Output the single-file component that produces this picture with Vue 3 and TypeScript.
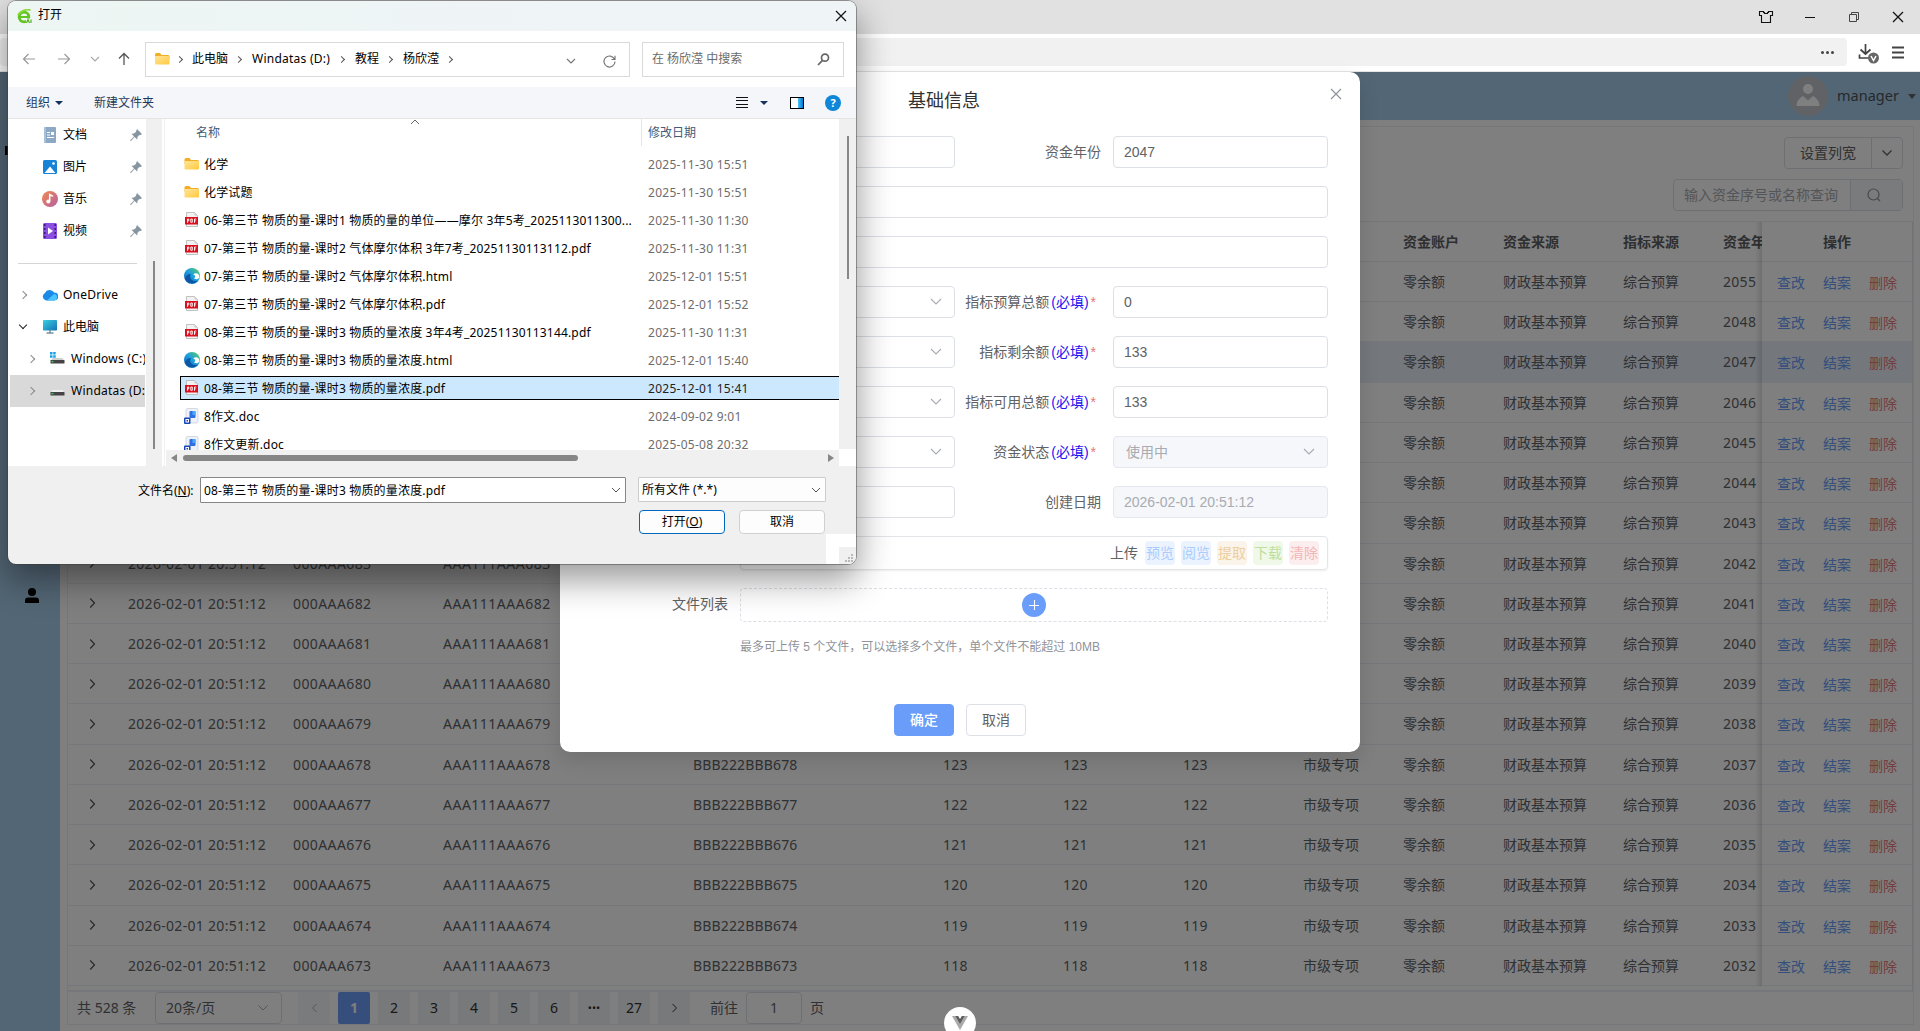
<script setup lang="ts">
interface Row { code: number; amount: number; year: number; active: boolean }
interface FileItem { kind: 'folder' | 'pdf' | 'edge' | 'doc'; name: string; date: string; selected?: boolean }

const rows: Row[] = Array.from({ length: 18 }, (_, i) => ({
  code: 690 - i,
  amount: 135 - i,
  year: i === 0 ? 2055 : 2049 - i,
  active: i === 2,
}))

const places = ['文档', '图片', '音乐', '视频']

const files: FileItem[] = [
  { kind: 'folder', name: '化学', date: '2025-11-30 15:51' },
  { kind: 'folder', name: '化学试题', date: '2025-11-30 15:51' },
  { kind: 'pdf', name: '06-第三节 物质的量-课时1 物质的量的单位——摩尔 3年5考_2025113011300...', date: '2025-11-30 11:30' },
  { kind: 'pdf', name: '07-第三节 物质的量-课时2 气体摩尔体积 3年7考_20251130113112.pdf', date: '2025-11-30 11:31' },
  { kind: 'edge', name: '07-第三节 物质的量-课时2 气体摩尔体积.html', date: '2025-12-01 15:51' },
  { kind: 'pdf', name: '07-第三节 物质的量-课时2 气体摩尔体积.pdf', date: '2025-12-01 15:52' },
  { kind: 'pdf', name: '08-第三节 物质的量-课时3 物质的量浓度 3年4考_20251130113144.pdf', date: '2025-11-30 11:31' },
  { kind: 'edge', name: '08-第三节 物质的量-课时3 物质的量浓度.html', date: '2025-12-01 15:40' },
  { kind: 'pdf', name: '08-第三节 物质的量-课时3 物质的量浓度.pdf', date: '2025-12-01 15:41', selected: true },
  { kind: 'doc', name: '8作文.doc', date: '2024-09-02 9:01' },
  { kind: 'doc', name: '8作文更新.doc', date: '2025-05-08 20:32' },
]

const formRows = [
  { select: false, label: '资金年份', required: false, value: '2047', disabled: false, wide: false },
  { select: false, label: '', required: false, value: '', disabled: false, wide: true },
  { select: false, label: '', required: false, value: '', disabled: false, wide: true },
  { select: true, label: '指标预算总额', required: true, value: '0', disabled: false, wide: false },
  { select: true, label: '指标剩余额', required: true, value: '133', disabled: false, wide: false },
  { select: true, label: '指标可用总额', required: true, value: '133', disabled: false, wide: false },
  { select: true, label: '资金状态', required: true, value: '使用中', disabled: true, wide: false },
  { select: false, label: '创建日期', required: false, value: '2026-02-01 20:51:12', disabled: true, wide: false },
]

const tags = [
  { text: '预览', tone: 'blue' },
  { text: '阅览', tone: 'blue' },
  { text: '提取', tone: 'amber' },
  { text: '下载', tone: 'green' },
  { text: '清除', tone: 'red' },
]

const pages = ['1', '2', '3', '4', '5', '6', '•••', '27']
</script>

<template>
  <div class="screen">
    <svg class="defs" width="0" height="0">
      <defs>
        <linearGradient id="gFolder" x1="0" y1="0" x2="1" y2="1"><stop offset="0" stop-color="#ffe59a" /><stop offset="1" stop-color="#ffc93c" /></linearGradient>
        <linearGradient id="gEdge" x1="0" y1="1" x2="1" y2="0"><stop offset="0" stop-color="#0c59a4" /><stop offset=".5" stop-color="#1b9de2" /><stop offset="1" stop-color="#5fd35a" /></linearGradient>
        <linearGradient id="gMusic" x1="0" y1="0" x2="1" y2="1"><stop offset="0" stop-color="#f08a4b" /><stop offset="1" stop-color="#b65fa8" /></linearGradient>
        <linearGradient id="gPc" x1="0" y1="0" x2="1" y2="1"><stop offset="0" stop-color="#39cfe0" /><stop offset="1" stop-color="#1273b5" /></linearGradient>
        <linearGradient id="gPane" x1="0" y1="0" x2="1" y2="0"><stop offset="0" stop-color="#4cc2f5" /><stop offset="1" stop-color="#0078d4" /></linearGradient>
      </defs>
    </svg>

    <!-- browser chrome -->
    <header class="tabbar">
      <svg class="win shirt" width="16" height="14" viewBox="0 0 16 14"><path d="M1.500 1.500h4v1h1v1h3v-1h1v-1h4v4h-2v7h-9v-7h-2z" fill="none" stroke="#111" stroke-width="1.100" /></svg>
      <svg class="win" width="12" height="12" viewBox="0 0 12 12"><path d="M1 6.500h10" stroke="#111" /></svg>
      <svg class="win" width="12" height="12" viewBox="0 0 12 12"><path d="M1.500 3.500h7v7h-7zM3.500 3.500v-2h7v7h-2" fill="none" stroke="#444" /></svg>
      <svg class="win" width="12" height="12" viewBox="0 0 12 12"><path d="M1 1l10 10M11 1L1 11" stroke="#111" stroke-width="1.300" /></svg>
    </header>
    <div class="urlbar">
      <div class="address"><i></i><i></i><i></i></div>
      <svg class="dl" width="22" height="20" viewBox="0 0 22 20">
        <path d="M7.500 0v9.500M2.500 5.500l5 4.500 5-4.500M1.500 10.500v3.500h9" fill="none" stroke="#444" stroke-width="1.700" />
        <circle cx="15.500" cy="14" r="5.500" fill="#666" /><path d="M13 12l2.500 4.500L18 12" fill="none" stroke="#fff" stroke-width="1.500" />
      </svg>
      <svg class="menu" width="12" height="13" viewBox="0 0 12 13"><path d="M0 1.500h12M0 6.500h12M0 11.500h12" stroke="#444" stroke-width="2" /></svg>
    </div>

    <!-- application page -->
    <div class="page">
      <div class="topbar">
        <svg width="40" height="40" viewBox="0 0 40 40"><circle cx="20" cy="20" r="20" fill="#c0c4cc" /><circle cx="20" cy="13" r="5" fill="#fff" /><path d="M8.500 30c0-5 3-8 6.500-10l5 4.500 5-4.500c3.500 2 6.500 5 6.500 10z" fill="#fff" /></svg>
        <span class="who">manager</span>
        <i class="caret"></i>
      </div>
      <div class="body">
        <aside class="rail">
          <b></b>
          <svg width="14" height="15" viewBox="0 0 14 15"><circle cx="7" cy="4" r="4" fill="#000" /><path d="M0 15v-2.500c0-2 1-3 3-3h8c2 0 3 1 3 3V15z" fill="#000" /></svg>
        </aside>
        <main class="panel">
          <div class="tools">
            <div class="split"><span>设置列宽</span><em><svg width="12" height="8" viewBox="0 0 12 8"><path d="M1.500 1.500L6 6l4.500-4.500" fill="none" stroke="#606266" stroke-width="1.300" /></svg></em></div>
            <div class="search"><span>输入资金序号或名称查询</span><em><svg width="14" height="14" viewBox="0 0 14 14"><circle cx="6.500" cy="6.500" r="5.500" fill="none" stroke="#909399" stroke-width="1.200" /><path d="M10.500 10.500l2.500 2.500" stroke="#909399" stroke-width="1.200" /></svg></em></div>
          </div>
          <div class="table">
            <div class="tr th">
              <div class="c0"></div><div class="c1"></div><div class="c2"></div><div class="c3"></div><div class="c3"></div>
              <div class="c4"></div><div class="c4"></div><div class="c4"></div><div class="c5"></div>
              <div class="c5">资金账户</div><div class="c4">资金来源</div><div class="c5">指标来源</div><div class="c6">资金年份</div>
              <div class="ops"><span>操作</span></div>
            </div>
            <div v-for="r in rows" :key="r.code" class="tr" :class="{ on: r.active }">
              <div class="c0"><svg width="7" height="12" viewBox="0 0 7 12"><path d="M1.200 1.500L5.500 6l-4.300 4.500" fill="none" stroke="#505257" stroke-width="1.200" /></svg></div>
              <div class="c1 num">2026-02-01 20:51:12</div>
              <div class="c2 num">000AAA{{ r.code }}</div>
              <div class="c3 num">AAA111AAA{{ r.code }}</div>
              <div class="c3 num bbb">BBB222BBB{{ r.code }}</div>
              <div class="c4 num">{{ r.amount }}</div><div class="c4 num">{{ r.amount }}</div><div class="c4 num">{{ r.amount }}</div>
              <div class="c5">市级专项</div><div class="c5">零余额</div><div class="c4">财政基本预算</div><div class="c5">综合预算</div>
              <div class="c6 num">{{ r.year }}</div>
              <div class="ops"><a>查改</a><a>结案</a><a class="del">删除</a></div>
            </div>
          </div>
          <div class="pager">
            <span class="total">共 528 条</span>
            <div class="size"><span>20条/页</span><svg width="12" height="8" viewBox="0 0 12 8"><path d="M1.500 1.500L6 6l4.500-4.500" fill="none" stroke="#a8abb2" /></svg></div>
            <div class="pg prev"><svg width="7" height="10" viewBox="0 0 7 10"><path d="M5.500 1L1.500 5l4 4" fill="none" stroke="#a8abb2" /></svg></div>
            <div v-for="p in pages" :key="p" class="pg" :class="{ cur: p === '1', dots: p === '•••' }">{{ p }}</div>
            <div class="pg"><svg width="7" height="10" viewBox="0 0 7 10"><path d="M1.500 1l4 4-4 4" fill="none" stroke="#303133" /></svg></div>
            <span class="go">前往</span><div class="jump">1</div><span>页</span>
          </div>
        </main>
      </div>
      <div class="mask"></div>
    </div>

    <!-- detail form -->
    <section class="modal">
      <div class="mhead">基础信息
        <svg class="mclose" width="12" height="12" viewBox="0 0 12 12"><path d="M1 1l10 10M11 1L1 11" stroke="#909399" stroke-width="1.200" /></svg>
      </div>
      <div class="form">
        <div v-for="(f, i) in formRows" :key="i" class="frow">
          <div class="flabel first"></div>
          <div class="inp" :class="{ full: f.wide }">
            <svg v-if="f.select" class="down" width="12" height="8" viewBox="0 0 12 8"><path d="M1 1l5 5 5-5" fill="none" stroke="#a8abb2" stroke-width="1.100" /></svg>
          </div>
          <template v-if="!f.wide">
            <div class="flabel second">{{ f.label }}<template v-if="f.required"><b>(必填)</b><i>*</i></template></div>
            <div class="inp" :class="{ off: f.disabled, sel: f.select && f.disabled }"><span>{{ f.value }}</span>
              <svg v-if="f.select && f.disabled" class="down" width="12" height="8" viewBox="0 0 12 8"><path d="M1 1l5 5 5-5" fill="none" stroke="#a8abb2" stroke-width="1.100" /></svg>
            </div>
          </template>
        </div>
        <div class="frow up">
          <div class="flabel first"></div>
          <div class="upbox"><span>上传</span><em v-for="t in tags" :key="t.text" :class="t.tone">{{ t.text }}</em></div>
        </div>
        <div class="frow up">
          <div class="flabel first lift">文件列表</div>
          <div class="drop"><svg width="24" height="24" viewBox="0 0 24 24"><circle cx="12" cy="12" r="12" fill="#6a9df9" /><path d="M7 12.500h10M12.500 7v10" stroke="#fff" stroke-width="1.100" /></svg></div>
        </div>
        <div class="tip">最多可上传 5 个文件，可以选择多个文件，单个文件不能超过 10MB</div>
      </div>
      <div class="mfoot"><button class="ok">确定</button><button>取消</button></div>
    </section>

    <div class="badge"><svg width="16" height="14" viewBox="0 0 16 14"><path d="M0 0h3.200L8 8.300 12.800 0H16L8 14z" fill="#a9a9a9" /><path d="M3.200 0h3L8 3.100 9.800 0h3L8 8.300z" fill="#5e5e5e" /></svg></div>

    <!-- file picker window -->
    <section class="picker">
      <div class="ptitle">
        <svg width="15" height="15" viewBox="0 0 15 15"><circle cx="7" cy="8" r="4.800" fill="none" stroke="#63c51f" stroke-width="2.800" /><path d="M3 8h9" stroke="#63c51f" stroke-width="2" /><path d="M9 9.500h6V15H9z" fill="#eff6f5" /><path d="M1 6C3 2 9 0 13.500 1" fill="none" stroke="#8ada3c" stroke-width="1.800" /><path d="M9.500 14l1.500-3.500 1.500 3.500M14 10.500V14" fill="none" stroke="#4fb516" stroke-width="1.200" /></svg>
        <span>打开</span>
        <svg class="px" width="12" height="12" viewBox="0 0 12 12"><path d="M1 1l10 10M11 1L1 11" stroke="#111" stroke-width="1.200" /></svg>
      </div>
      <div class="pnav">
        <svg class="n1" width="14" height="12" viewBox="0 0 14 12"><path d="M13 6H1.500M6.500 1l-5 5 5 5" fill="none" stroke="#9a9a9a" stroke-width="1.200" /></svg>
        <svg class="n2" width="14" height="12" viewBox="0 0 14 12"><path d="M1 6h11.500M7.500 1l5 5-5 5" fill="none" stroke="#9a9a9a" stroke-width="1.200" /></svg>
        <svg class="n3" width="10" height="6" viewBox="0 0 10 6"><path d="M1 1l4 4 4-4" fill="none" stroke="#aaa" stroke-width="1.200" /></svg>
        <svg class="n4" width="12" height="14" viewBox="0 0 12 14"><path d="M6 13V1.500M1 6.500l5-5 5 5" fill="none" stroke="#555" stroke-width="1.300" /></svg>
        <div class="crumbs">
          <svg width="15" height="12" viewBox="0 0 15 12"><path d="M0 1.500Q0 0 1.500 0H5l1.500 2H13q1.500 0 1.500 1.500V6H0z" fill="#f3ae28" /><rect y="3" width="14.500" height="8.500" rx="1" fill="url(#gFolder)" /></svg>
          <u></u><span class="k1">此电脑</span><u></u><span class="k2">Windatas (D:)</span><u></u><span class="k3">教程</span><u></u><span class="k4">杨欣滢</span><u></u>
          <svg class="cd" width="10" height="6" viewBox="0 0 10 6"><path d="M1 1l4 4 4-4" fill="none" stroke="#777" stroke-width="1.200" /></svg>
          <svg class="rf" width="13" height="13" viewBox="0 0 13 13"><path d="M11.500 4.200A5.500 5.500 0 1 0 12 6.500M12 .8v3.700H8.500" fill="none" stroke="#777" stroke-width="1.200" /></svg>
        </div>
        <div class="psearch"><span>在 杨欣滢 中搜索</span><svg width="13" height="13" viewBox="0 0 13 13"><circle cx="8" cy="4.700" r="3.500" fill="none" stroke="#666" stroke-width="1.700" /><path d="M5.500 7.300L1 12" stroke="#666" stroke-width="1.700" /></svg></div>
      </div>
      <div class="pbar">
        <span>组织</span><i class="tri"></i><span class="nf">新建文件夹</span>
        <svg class="lst" width="12" height="11" viewBox="0 0 12 11"><path d="M0 .5h12M0 3.500h12M0 7.500h12M0 10.500h12" stroke="#111" /></svg>
        <i class="tri t2"></i>
        <svg class="pane" width="14" height="12" viewBox="0 0 14 12"><rect x=".5" y=".5" width="13" height="11" fill="#fff" stroke="#000" /><rect x="8" y="1" width="5" height="10" fill="url(#gPane)" /></svg>
        <span class="help">?</span>
      </div>
      <div class="pmain">
        <nav class="tree">
          <div v-for="(p, i) in places" :key="p" class="ti">
            <svg width="16" height="16" viewBox="0 0 16 16">
              <g v-if="i === 0"><rect x="2" width="12" height="16" rx="1" fill="#8da8c4" /><rect x="2" width="2" height="16" fill="#aac0d6" /><path d="M5 5.500h3M5 8h3M5 10.500h7" stroke="#fff" stroke-width="1.100" /><rect x="9" y="5" width="3" height="3" fill="#fff" /></g>
              <g v-else-if="i === 1"><rect x="1" y="1" width="14" height="14" rx="1.500" fill="#1683d8" /><path d="M2.500 14L8 7.500l5.500 6.500z" fill="#fff" /><circle cx="11.500" cy="4.500" r="1.300" fill="#fff" /></g>
              <g v-else-if="i === 2"><circle cx="8" cy="8" r="8" fill="url(#gMusic)" /><circle cx="6.300" cy="10.500" r="2" fill="#fff" /><path d="M7.700 10.500V3.500l3.300 1.800" fill="none" stroke="#fff" stroke-width="1.500" /></g>
              <g v-else><rect x="1" width="14" height="16" rx="1.500" fill="#8a4fe0" /><path d="M2.800 1v14M13.200 1v14" stroke="#3f1c7c" stroke-width="1.600" stroke-dasharray="2 2" /><path d="M6 4.500v7l5-3.500z" fill="#fff" /></g>
            </svg>
            <span>{{ p }}</span>
            <svg class="pin" width="12" height="12" viewBox="0 0 12 12"><path d="M7 0l5 5-1.500 1-1.500.3L7.500 8 7.200 10.500 4.500 8 1 12 0 11.500 4 7.500 1.500 4.800 4 4.500 5.800 3z" fill="#8795a1" /></svg>
          </div>
          <div class="rule"></div>
          <div class="ti b"><i class="chv"></i><svg width="16" height="12" viewBox="0 0 16 12"><path d="M4 11.500a4 4 0 0 1-1-7.500A5 5 0 0 1 12 3.500a4 4 0 0 1 .5 8z" fill="#1a8ae8" /><path d="M5 11.500l7-6.500a3.300 3.300 0 0 1 .5 6.500z" fill="#4cc3ff" /></svg><span class="lt">OneDrive</span></div>
          <div class="ti b"><i class="chv open"></i><svg width="16" height="14" viewBox="0 0 16 14"><rect x="1" width="14" height="10.500" rx=".8" fill="url(#gPc)" /><path d="M8 10v2.500M4.500 13h7" stroke="#78909c" stroke-width="1.500" /></svg><span>此电脑</span></div>
          <div class="ti c"><i class="chv"></i><svg width="15" height="14" viewBox="0 0 15 14"><path d="M0 0h2.500v2.500H0zM3.200 0h2.500v2.500H3.200zM0 3.200h2.500v2.500H0zM3.200 3.200h2.500v2.500H3.200z" fill="#1aa0e8" /><path d="M2.500 6h10L14 8.500H1z" fill="#d0d0d0" /><rect x=".5" y="8" width="14" height="3.500" rx=".6" fill="#444" /><rect x="1.500" y="9.200" width="2" height="1" fill="#3cff5a" /></svg><span class="lt">Windows (C:)</span></div>
          <div class="ti c sel"><i class="chv"></i><svg width="15" height="14" viewBox="0 0 15 14"><path d="M2.500 6h10L14 8.500H1z" fill="#eee" /><rect x=".5" y="8" width="14" height="3.500" rx=".6" fill="#444" /><rect x="1.500" y="9.200" width="2" height="1" fill="#3cff5a" /></svg><span class="lt">Windatas (D:)</span></div>
        </nav>
        <div class="tscroll"><i></i></div>
        <div class="list">
          <div class="lhead"><span class="h1">名称</span><span class="h2">修改日期</span>
            <svg class="srt" width="10" height="6" viewBox="0 0 10 6"><path d="M1 5l4-4 4 4" fill="none" stroke="#666" /></svg></div>
          <div class="lrows">
            <div v-for="f in files" :key="f.name" class="lr" :class="{ sel: f.selected }">
              <svg width="16" height="16" viewBox="0 0 16 16">
                <g v-if="f.kind === 'folder'"><path d="M.5 3.500Q.5 2 2 2h3.500L7 4h6.500q1.500 0 1.500 1.500V8H.5z" fill="#f3ae28" /><rect x=".5" y="5" width="14.500" height="8.500" rx="1" fill="url(#gFolder)" /></g>
                <g v-else-if="f.kind === 'pdf'"><path d="M2.500.5h8l3 3v11h-11z" fill="#f2f2f2" stroke="#aaa" stroke-width=".7" /><path d="M10.500.5v3h3" fill="#ccc" /><rect x="1" y="5" width="13" height="7.500" fill="#d9101e" /><path d="M3.500 10.800V7h1.300v1.900H3.500M6.800 7v3.300h1.500V7zM10.500 10.800V7h1.800M10.500 8.900h1.300" fill="none" stroke="#fff" stroke-width=".9" /></g>
                <g v-else-if="f.kind === 'edge'"><circle cx="8" cy="8" r="8" fill="url(#gEdge)" /><path d="M9 6.500c2 0 3 2.500 1 4 2 1.500 4 .8 5.500-1 0-4-3.500-5.500-6.500-3z" fill="#fff" /><path d="M6 8c0 4 4 6 8 4.500A8 8 0 0 1 1 11C1.500 8 3.500 6 7 6z" fill="#0d55a5" /></g>
                <g v-else><rect x="2" y=".5" width="12" height="14.500" rx="1.500" fill="#eef1f7" stroke="#c5cad6" stroke-width=".7" /><rect x="5.500" y="3" width="6" height="7" rx="1" fill="#2f6fe0" /><rect x="8.500" y="3" width="3" height="4" fill="#4ea8ff" /><rect x="0" y="9.500" width="6.500" height="6.500" rx="1" fill="#1547b5" /><rect x="2" y="11.500" width="2.500" height="2.500" fill="none" stroke="#fff" /></g>
              </svg>
              <span class="fn">{{ f.name }}</span><span class="fd">{{ f.date }}</span>
            </div>
          </div>
          <div class="hscroll"><i class="la"></i><b></b><i class="ra"></i></div>
        </div>
        <div class="vscroll"><i></i></div>
      </div>
      <div class="pfoot">
        <div class="f1"><label>文件名(<u>N</u>):</label>
          <div class="fin"><span>08-第三节 物质的量-课时3 物质的量浓度.pdf</span><svg width="10" height="6" viewBox="0 0 10 6"><path d="M1 1l4 4 4-4" fill="none" stroke="#555" /></svg></div>
          <div class="ftype"><span>所有文件 (*.*)</span><svg width="10" height="6" viewBox="0 0 10 6"><path d="M1 1l4 4 4-4" fill="none" stroke="#555" /></svg></div>
        </div>
        <div class="f2"><div class="pb def">打开(<u>O</u>)</div><div class="pb">取消</div></div>
        <div class="corner"><div class="grip"><svg width="9" height="9" viewBox="0 0 9 9"><path d="M6 0h2v2H6zM6 3h2v2H6zM3 3h2v2H3zM6 6h2v2H6zM3 6h2v2H3zM0 6h2v2H0z" fill="#b9b9b9" /></svg></div></div>
      </div>
    </section>
  </div>
</template>

<style>
html, body { margin: 0; overflow: hidden; }
</style>

<style scoped>
* { box-sizing: border-box; }
svg { display: block; flex: none; }
.defs { position: absolute; }
.screen { position: relative; width: 1920px; height: 1031px; overflow: hidden; display: flex; flex-direction: column; background: #fff; font: 14px/20px "Noto Sans", "Noto Sans CJK SC", sans-serif; color: #606266; }
.tabbar { height: 34px; flex: none; background: #e1e1e1; display: flex; justify-content: flex-end; align-items: center; gap: 32px; padding-right: 16px; }
.shirt { margin-right: -2px; }
.urlbar { height: 38px; flex: none; display: flex; align-items: flex-start; padding-top: 4px; border-bottom: 1px solid #e4e4e4; }
.address { width: 1847px; height: 28px; background: #f1f1f1; border-radius: 4px; display: flex; justify-content: flex-end; align-items: center; gap: 2px; padding-right: 13px; margin-right: 11px; flex: none; }
.address i { width: 3px; height: 3px; border-radius: 2px; background: #444; }
.dl { margin-top: 6px; }
.menu { margin: 8px 0 0 12px; }
.page { position: relative; flex: 1; display: flex; flex-direction: column; background: #fff; }
.mask { position: absolute; inset: 0; background: rgba(0, 0, 0, .5); }
.topbar { height: 48px; flex: none; background: #a6cdea; display: flex; align-items: center; justify-content: flex-end; padding-right: 4px; }
.who { font-size: 14.500px; margin-left: 9px; width: 62px; white-space: nowrap; color: #4d5157; margin-top: -2px; }
.caret { width: 8px; border: 4.500px solid transparent; border-top: 5.500px solid #606266; border-bottom: 0; margin-left: 9px; }
.body { flex: 1; display: flex; min-height: 0; }
.rail { width: 60px; flex: none; background: #a6cdea; display: flex; flex-direction: column; align-items: flex-start; padding: 26px 0 0 5px; }
.rail b { width: 10px; height: 9px; background: #000; }
.rail svg { margin: 433px 0 0 20px; }
.panel { width: 1847px; height: 899px; margin: 6px 0 0 7px; border: 1px solid #ebeef5; display: flex; flex-direction: column; }
.tools { height: 94px; flex: none; display: flex; flex-direction: column; align-items: flex-end; gap: 10px; padding: 10px 10px 0; }
.split, .search { display: flex; height: 32px; border: 1px solid #dcdfe6; border-radius: 4px; line-height: 30px; }
.split span { padding: 0 15px; width: 86px; white-space: nowrap; }
.split em, .search em { border-left: 1px solid #dcdfe6; width: 31px; display: flex; align-items: center; justify-content: center; }
.search em { width: 52px; background: #f5f7fa; padding-right: 5px; }
.search span { width: 176px; padding-left: 10px; color: #a8abb2; white-space: nowrap; }
.table { height: 771px; flex: none; border-top: 1px solid #ebeef5; border-bottom: 2px solid #ebeef5; border-right: 1px solid #e4e7ed; overflow: hidden; }
.tr { display: flex; height: 40.220px; border-bottom: 1px solid #ebeef5; line-height: 39px; white-space: nowrap; background: #fff; }
.tr > div { padding-left: 12px; flex: none; }
.th { font-weight: 700; color: #5c5e63; height: 40px; }
.on { background: #e8f0fb; }
.tr > .c0 { width: 48px; display: flex; align-items: center; padding-left: 21px; }
.c1 { width: 165px; } .c2 { width: 150px; } .c3 { width: 250px; } .c4 { width: 120px; } .c5 { width: 100px; }
.c6 { width: 51px; overflow: hidden; }
.num { letter-spacing: .3px; }
.c2.num { letter-spacing: .4px; }
.c3.num { letter-spacing: .5px; }
.c3.bbb { letter-spacing: .15px; }
.tr > .ops { width: 150px; padding: 1px 0 0 15px; display: flex; gap: 18px; position: relative; background: inherit; }
.ops::before { content: ""; position: absolute; right: 100%; top: 0; bottom: -1px; width: 7px; background: linear-gradient(to left, rgba(0, 0, 0, .13), rgba(0, 0, 0, 0)); }
.th > .ops { justify-content: center; padding: 0; }
.ops a { color: #6a9df9; }
.ops .del { color: #e87b7b; }
.pager { flex: 1; display: flex; align-items: center; padding-left: 9px; white-space: nowrap; }
.total { width: 78px; }
.size { width: 127px; height: 32px; border: 1px solid #dcdfe6; border-radius: 4px; display: flex; align-items: center; justify-content: space-between; padding: 0 12px 0 10px; }
.pg { width: 32px; height: 32px; margin-left: 8px; background: #f0f2f5; color: #303133; display: flex; align-items: center; justify-content: center; border-radius: 2px; }
.pg.prev { margin-left: 16px; background: #f5f7fa; }
.pg.cur { background: #6a9df9; color: #fff; font-weight: 700; }
.pg.dots { font-size: 11px; }
.go { margin-left: 20px; }
.jump { width: 56px; height: 32px; border: 1px solid #dcdfe6; border-radius: 4px; margin: 0 8px; text-align: center; line-height: 30px; }

.modal { position: absolute; left: 560px; top: 72px; width: 800px; height: 680px; background: #fff; border-radius: 0 10px 10px 10px; box-shadow: 0 8px 20px rgba(0, 0, 0, .12); display: flex; flex-direction: column; font-family: "Liberation Sans", "Noto Sans CJK SC", sans-serif; }
.mhead { position: relative; height: 64px; flex: none; text-align: center; text-indent: -32px; font-size: 18px; line-height: 58px; color: #303133; }
.mclose { position: absolute; right: 18px; top: 16px; }
.form { display: flex; flex-direction: column; gap: 18px; }
.frow { display: flex; height: 32px; align-items: center; }
.up { height: 34px; }
.flabel { text-align: right; white-space: nowrap; flex: none; padding-right: 12px; }
.first { width: 180px; }
.lift { padding-bottom: 2px; }
.second { width: 158px; }
.second b { font-weight: 400; color: #2412f0; margin-left: 2px; }
.second i { font-style: normal; color: #ea7575; margin: 0 5px 0 2px; }
.inp { width: 215px; height: 32px; border: 1px solid #dcdfe6; border-radius: 4px; flex: none; padding: 0 10px; display: flex; align-items: center; }
.inp.full { width: 588px; }
.inp.sel { padding-left: 12px; }
.down { margin-left: auto; margin-right: 2px; }
.off { background: #f5f7fa; color: #a8abb2; border-color: #e4e7ed; }
.upbox, .drop { width: 588px; height: 34px; border: 1px solid #e2e4e8; border-radius: 4px; display: flex; align-items: center; }
.upbox { justify-content: flex-end; gap: 6px; padding-right: 8px; box-shadow: 0 1px 2px rgba(0, 0, 0, .07); }
.upbox span { margin-right: 1px; }
.upbox em { font-style: normal; width: 30px; height: 24px; line-height: 24px; text-align: center; border-radius: 4px; }
.blue { background: #ebf3ff; color: #accbfd; } .amber { background: #fbf4ea; color: #edcf9f; }
.green { background: #eff8e9; color: #bae09f; } .red { background: #fceeee; color: #f3b4b4; }
.drop { border-style: dashed; border-color: #dcdfe6; justify-content: center; }
.tip { margin: -1px 0 0 180px; font-size: 12px; line-height: 16px; color: #909399; white-space: nowrap; }
.mfoot { display: flex; justify-content: center; gap: 12px; margin-top: 49px; }
.mfoot button { width: 60px; height: 32px; padding: 0; border: 1px solid #dcdfe6; border-radius: 4px; background: #fff; font: inherit; color: #606266; }
.mfoot .ok { background: #6a9df9; border-color: #6a9df9; color: #fff; font-weight: 500; }
.badge { position: absolute; left: 944px; top: 1007px; width: 32px; height: 32px; border-radius: 50%; background: #fff; display: flex; justify-content: center; padding-top: 9px; }

.picker { position: absolute; left: 8px; top: 1px; width: 848px; height: 563px; border-radius: 8px; overflow: hidden; background: #f0f0f0; font-size: 12px; line-height: 16px; color: #000; display: flex; flex-direction: column; white-space: nowrap; box-shadow: 0 0 0 1px rgba(60, 60, 60, .45), 0 14px 34px 2px rgba(0, 0, 0, .4); }
.ptitle { height: 30px; flex: none; background: linear-gradient(90deg, #edf6f3, #eff4f7 70%); display: flex; align-items: center; padding-left: 9px; }
.ptitle span { margin: -2px 0 0 6px; }
.px { margin-left: auto; margin-right: 9px; }
.pnav { height: 56px; flex: none; background: #fff; display: flex; align-items: center; padding-left: 14px; }
.n2 { margin-left: 21px; } .n3 { margin-left: 19px; } .n4 { margin-left: 18px; }
.crumbs { margin-left: 15px; width: 485px; height: 35px; border: 1px solid #d9d9d9; display: flex; align-items: center; padding-left: 9px; }
.crumbs span { white-space: nowrap; margin-top: -1px; }
.k1, .k4 { width: 36px; } .k2 { width: 79px; letter-spacing: .25px; } .k3 { width: 24px; }
.crumbs u { width: 5px; height: 5px; border: solid #555; border-width: 1.300px 1.300px 0 0; transform: rotate(45deg); margin: 0 11px 0 8px; }
.crumbs svg + u { margin: 0 10px 0 7px; }
.cd { margin-left: auto; margin-top: 4px; } .rf { margin: 4px 13px 0 27px; }
.psearch { margin-left: 12px; width: 202px; height: 35px; border: 1px solid #d9d9d9; display: flex; align-items: center; justify-content: space-between; padding: 0 13px 0 9px; color: #6b6b6b; }
.pbar { height: 32px; flex: none; background: #f4f6f9; border-bottom: 1px solid #e5e5e5; display: flex; align-items: center; padding-left: 18px; color: #1e395b; }
.tri { border: 4px solid transparent; border-top: 4.500px solid #16315c; border-bottom: 0; margin-left: 5px; }
.nf { margin-left: 31px; } .lst { margin-left: auto; } .t2 { margin-left: 12px; } .pane { margin-left: 22px; }
.help { width: 16px; height: 16px; border-radius: 50%; background: #0f86d8; color: #fff; font-weight: 700; font-size: 11px; text-align: center; line-height: 16px; margin: 0 15px 0 21px; }
.pmain { height: 347px; flex: none; display: flex; background: #fff; }
.tree { width: 138px; flex: none; display: flex; flex-direction: column; overflow: hidden; }
.ti { height: 32px; flex: none; display: flex; align-items: center; padding-left: 34px; width: 137px; overflow: hidden; }
.ti span { margin-left: 5px; }
.ti .lt { letter-spacing: .25px; }
.pin { margin-left: auto; margin-right: 3px; }
.rule { height: 1px; flex: none; background: #d5d5d5; width: 119px; margin: 16px 0 15px 10px; }
.ti.b { padding-left: 12px; } .ti.b svg { margin-left: 15px; }
.ti.c { padding-left: 18px; margin-left: 2px; width: 135px; } .ti.c svg { margin-left: 15px; } .ti.c span { margin-left: 6px; }
.ti.sel { background: #d9d9d9; }
.chv { flex: none; width: 6px; height: 6px; border: solid #8a8a8a; border-width: 1.300px 1.300px 0 0; transform: rotate(45deg); margin-right: 1px; }
.chv.open { border-color: #222; transform: translateY(-2px) rotate(135deg); }
.tscroll { width: 16px; flex: none; background: #f0f0f0; padding: 142px 0 0 7px; }
.tscroll i { display: block; width: 2px; height: 188px; background: #868686; }
.list { width: 677px; flex: none; display: flex; flex-direction: column; padding-left: 4px; background: linear-gradient(#f0f0f0, #f0f0f0) 2px 0 / 1px 100% no-repeat; }
.lhead { position: relative; height: 31px; flex: none; display: flex; color: #445a77; padding: 6px 0 0 30px; }
.h1 { width: 445px; } .h2 { margin-top: -6px; padding: 6px 0 0 6px; height: 27px; border-left: 1px solid #e5e5e5; }
.srt { position: absolute; left: 244px; top: 0; }
.lrows { height: 300px; flex: none; overflow: hidden; display: flex; flex-direction: column; gap: 4px; padding-top: 2px; margin-left: 14px; }
.lr { height: 24px; flex: none; display: flex; align-items: center; padding-left: 4px; }
.lr.sel { background: #cce8ff; box-shadow: inset 1px 0 #000, inset 0 1px #000, inset 0 -1px #000; }
.fn { width: 439px; margin: 1px 0 0 4px; letter-spacing: .17px; }
.fd { margin: 1px 0 0 5px; color: #6d6d6d; letter-spacing: .27px; }
.sel .fd { color: #222; }
.hscroll { height: 16px; flex: none; background: #f0f0f0; display: flex; align-items: center; padding: 0 5px; }
.hscroll b { width: 395px; height: 6px; border-radius: 3px; background: #868686; margin-left: 6px; }
.la, .ra { border: 4px solid transparent; border-right: 6px solid #868686; border-left: 0; }
.ra { border-right: 0; border-left: 6px solid #868686; margin-left: auto; }
.vscroll { width: 17px; height: 330px; flex: none; background: #f0f0f0; padding: 17px 0 0 8px; }
.vscroll i { display: block; width: 2px; height: 143px; background: #868686; }
.pfoot { position: relative; flex: 1; display: flex; flex-direction: column; }
.f1 { display: flex; padding: 11px 0 0 130px; }
.f1 label { width: 62px; line-height: 27px; }
.fin, .ftype { display: flex; align-items: center; justify-content: space-between; background: #fff; border: 1px solid #868686; width: 426px; height: 26px; padding: 0 4px 0 3px; border-radius: 1px; }
.fin span { letter-spacing: .17px; margin-top: 1px; }
.ftype { width: 188px; margin-left: 12px; height: 25px; border-color: #ccc; background: #fdfdfd; }
.f2 { display: flex; gap: 14px; padding: 6px 0 0 631px; }
.pb { width: 86px; height: 24px; border: 1px solid #d0d0d0; border-radius: 4px; background: #fdfdfd; text-align: center; line-height: 22px; }
.def { border-color: #0067c0; }
.corner { position: absolute; right: 0; bottom: 0; width: 30px; height: 30px; background: #fff; }
.grip { position: absolute; right: 0; bottom: 0; width: 17px; height: 17px; background: #f0f0f0; padding: 7px 0 0 6px; }
</style>
